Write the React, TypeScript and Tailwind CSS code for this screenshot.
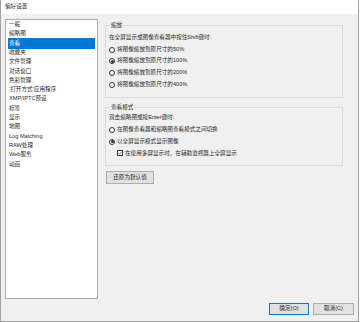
import React from 'react';

const navItems = [
  '一般',
  '缩略图',
  '查看',
  '收藏夹',
  '文件管理',
  '对话窗口',
  '色彩管理',
  '‘打开方式’应用程序',
  'XMP/IPTC预设',
  '标签',
  '显示',
  '地图',
  'Log Matching',
  'RAW处理',
  'Web服务',
  '动画',
];

const Radio: React.FC<{ checked?: boolean; label: string }> = ({ checked, label }) => (
  <div className="h-[11.7px] flex items-center gap-[2px]">
    <span className="w-[6px] h-[6px] rounded-full border border-[#333333] bg-white flex items-center justify-center shrink-0">
      {checked && <span className="w-[3px] h-[3px] rounded-full bg-[#333333]" />}
    </span>
    <span>{label}</span>
  </div>
);

const App: React.FC = () => {
  const selected = '查看';

  return (
    <div className="w-[359px] h-[322px] bg-[#f0f0f0] border-l border-r border-b border-[#a0a0a0] flex flex-col text-[5.6px] leading-none text-[#2a2a2a] font-['Liberation_Sans','Noto_Sans_CJK_SC',sans-serif]">
      {/* Title bar */}
      <div className="h-[14px] bg-white pl-[4px] flex items-center shrink-0">偏好设置</div>

      <div className="flex mt-[5px] pl-[4px]">
        {/* Category list */}
        <div className="w-[93px] h-[280px] border border-[#adadad] bg-white px-[2px] shrink-0">
          {navItems.map(item => (
            <div
              key={item}
              className={
                item === selected
                  ? 'h-[9.33px] flex items-center pl-[1px] bg-[#0078d7] text-white shadow-[0_1px_0_#0078d7,0_-1px_0_#0078d7]'
                  : 'h-[9.33px] flex items-center pl-[1px]'
              }
            >
              {item}
            </div>
          ))}
        </div>

        {/* Settings panel */}
        <div className="flex-1 pl-[7px] pr-[15px] pt-[3px] flex flex-col items-start">
          <fieldset className="w-full border border-[#dcdcdc] pl-[3px] pt-[3px] pb-[7px]">
            <legend className="px-[1px] ml-[1px] h-[7px] flex items-center">缩放</legend>
            <div className="h-[11.7px] flex items-center">在全屏显示或图像查看器中按住Shift键时:</div>
            <Radio label="将图像缩放到原尺寸的50%" />
            <Radio checked label="将图像缩放到原尺寸的100%" />
            <Radio label="将图像缩放到原尺寸的200%" />
            <Radio label="将图像缩放到原尺寸的400%" />
          </fieldset>

          <fieldset className="w-full border border-[#dcdcdc] pl-[3px] pt-[1px] pb-[6px] mt-[6px]">
            <legend className="px-[1px] ml-[1px] h-[7px] flex items-center">查看模式</legend>
            <div className="h-[11.7px] flex items-center">双击缩略图或按Enter键时:</div>
            <Radio label="在图像查看器和缩略图查看模式之间切换" />
            <Radio checked label="以全屏显示模式显示图像" />
            <div className="h-[11.7px] flex items-center gap-[2px] pl-[8px]">
              <span className="w-[6px] h-[6px] border border-[#333333] bg-white flex items-center justify-center shrink-0">
                <svg width="4" height="4" viewBox="0 0 8 8">
                  <path d="M1 4.2 L3.2 6.3 L7 1.6" fill="none" stroke="#333333" strokeWidth="1.4" />
                </svg>
              </span>
              <span>在使用多屏显示时，在辅助监视器上全屏显示</span>
            </div>
          </fieldset>

          <button className="mt-[5px] ml-[1px] w-[48px] h-[13px] bg-[#e1e1e1] border border-[#adadad] flex items-center justify-center">
            还原为默认值
          </button>
        </div>
      </div>

      {/* Dialog buttons */}
      <div className="flex justify-end gap-[4px] pr-[4px] mt-[4px]">
        <button className="w-[40px] h-[12px] bg-[#e1e1e1] border border-[#0078d7] flex items-center justify-center">
          确定(O)
        </button>
        <button className="w-[41px] h-[12px] bg-[#e1e1e1] border border-[#adadad] flex items-center justify-center">
          取消(C)
        </button>
      </div>
    </div>
  );
};

export default App;
